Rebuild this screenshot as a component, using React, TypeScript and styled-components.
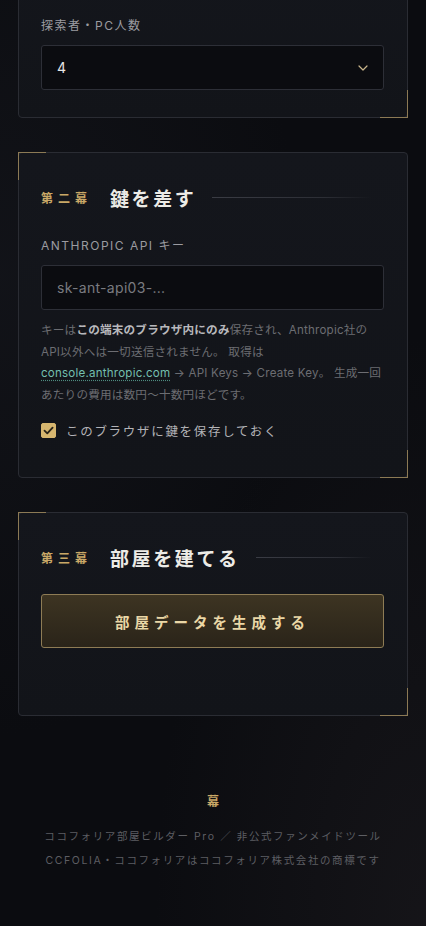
import React, { useState } from 'react';
import styled, { createGlobalStyle } from 'styled-components';

const GlobalStyle = createGlobalStyle`
  html, body {
    margin: 0;
    padding: 0;
    background: #0b0c10;
  }
  body {
    font-family: Inter, "Noto Sans CJK JP", sans-serif;
    color: #d8d8d8;
    overflow: hidden;
  }
`;

const Page = styled.div`
  min-height: 926px;
  box-sizing: border-box;
  padding: 0 18px;
  background:
    radial-gradient(ellipse at 100% 100%, rgba(40, 36, 40, 0.35), transparent 45%),
    radial-gradient(ellipse at 0% 30%, rgba(30, 32, 40, 0.35), transparent 50%),
    #0b0c10;
  display: flex;
  flex-direction: column;
`;

const Card = styled.section<{ $top?: number; $bottom: number; $first?: boolean }>`
  position: relative;
  box-sizing: border-box;
  margin-top: ${(p) => (p.$first ? '-40px' : '34px')};
  padding: ${(p) => p.$top ?? 31}px 23px ${(p) => p.$bottom}px 22px;
  background: linear-gradient(180deg, #14161c 0%, #121419 100%);
  border: 1px solid #2a2c33;
  border-radius: 4px;

  &::before {
    content: '';
    position: absolute;
    top: -1px;
    left: -1px;
    width: 27px;
    height: 27px;
    border-top: 1px solid #8c7a55;
    border-left: 1px solid #8c7a55;
    display: ${(p) => (p.$first ? 'none' : 'block')};
  }
  &::after {
    content: '';
    position: absolute;
    bottom: -1px;
    right: -1px;
    width: 27px;
    height: 27px;
    border-bottom: 1px solid #8c7a55;
    border-right: 1px solid #8c7a55;
  }
`;

const Heading = styled.div<{ $gap: number }>`
  display: flex;
  align-items: center;
  height: 26px;
  margin-bottom: ${(p) => p.$gap}px;
`;

const Act = styled.span`
  font-family: "Noto Sans CJK JP", serif;
  font-size: 12px;
  font-weight: 700;
  letter-spacing: 5px;
  color: #c9a867;
  margin-right: 18px;
`;

const Title = styled.h2`
  margin: 0;
  font-family: "Noto Sans CJK JP", serif;
  font-size: 19px;
  font-weight: 700;
  letter-spacing: 2.6px;
  color: #ecebe6;
  white-space: nowrap;
`;

const Rule = styled.span`
  flex: 1;
  height: 1px;
  margin-left: 16px;
  margin-right: 12px;
  background: linear-gradient(90deg, #3a3c44 0%, #2c2e35 70%, transparent 100%);
`;

const Label = styled.div`
  font-size: 12px;
  line-height: 18px;
  letter-spacing: 1.5px;
  color: #9b9ba0;
  margin-bottom: 10px;
`;

const Field = styled.div`
  position: relative;
  display: flex;
  align-items: center;
  height: 45px;
  box-sizing: border-box;
  padding: 0 15px;
  background: #0b0c10;
  border: 1px solid #2d2f37;
  border-radius: 3px;
`;

const Value = styled.span`
  flex: 1;
  font-size: 14px;
  color: #e6e6e6;
`;

const Placeholder = styled.span`
  flex: 1;
  font-size: 14px;
  color: #7a7b80;
  letter-spacing: 0.3px;
`;

const Help = styled.p`
  margin: 10px 0 0;
  font-size: 11.6px;
  line-height: 21.6px;
  letter-spacing: 0.2px;
  color: #6c6d72;

  strong {
    color: #b8b8bc;
    font-weight: 700;
  }
`;

const Link = styled.a`
  color: #73bfae;
  text-decoration: underline dotted #4e8c80;
  text-underline-offset: 3px;
`;

const CheckRow = styled.label`
  display: flex;
  align-items: center;
  gap: 10px;
  margin-top: 15px;
  font-size: 12.5px;
  letter-spacing: 1.7px;
  color: #b3b3b7;
  cursor: pointer;
`;

const Box = styled.span<{ $on: boolean }>`
  display: inline-flex;
  align-items: center;
  justify-content: center;
  width: 15px;
  height: 15px;
  border-radius: 2px;
  background: ${(p) => (p.$on ? '#d6b66f' : 'transparent')};
  border: 1px solid #d6b66f;
  box-sizing: border-box;
`;

const GenerateButton = styled.button`
  display: block;
  width: 100%;
  height: 54px;
  border: 1px solid #8e7c55;
  border-radius: 3px;
  background: linear-gradient(180deg, #3d3422 0%, #2a2419 100%);
  font-family: "Noto Sans CJK JP", serif;
  font-size: 14.5px;
  font-weight: 700;
  letter-spacing: 5px;
  color: #ead7a6;
  cursor: pointer;
`;

const Footer = styled.footer`
  margin-top: 74px;
  text-align: center;
`;

const Mark = styled.div`
  font-family: "Noto Sans CJK JP", serif;
  font-weight: 700;
  font-size: 12px;
  color: #c9a867;
  margin-top: 2px;
  margin-bottom: 16px;
`;

const FootLine = styled.div`
  font-size: 10.5px;
  line-height: 24px;
  letter-spacing: 1.6px;
  color: #5d5e63;
`;

const Chevron = () => (
  <svg width="10" height="6" viewBox="0 0 10 6" fill="none">
    <path d="M1 1l4 4 4-4" stroke="#c9b68c" strokeWidth="1.2" strokeLinecap="round" strokeLinejoin="round" />
  </svg>
);

const Check = () => (
  <svg width="11" height="9" viewBox="0 0 11 9" fill="none">
    <path d="M1.5 4.6l2.8 2.8L9.6 1.6" stroke="#2a2418" strokeWidth="1.8" strokeLinecap="round" strokeLinejoin="round" />
  </svg>
);

export default function App() {
  const [saveKey, setSaveKey] = useState(true);

  return (
    <>
      <GlobalStyle />
      <Page>
        <Card $first $top={56} $bottom={27}>
          <Label>探索者・PC人数</Label>
          <Field>
            <Value>4</Value>
            <Chevron />
          </Field>
        </Card>

        <Card $bottom={37}>
          <Heading $gap={27}>
            <Act>第二幕</Act>
            <Title>鍵を差す</Title>
            <Rule />
          </Heading>
          <Label>ANTHROPIC API キー</Label>
          <Field>
            <Placeholder>sk-ant-api03-...</Placeholder>
          </Field>
          <Help>
            キーは<strong>この端末のブラウザ内にのみ</strong>保存され、Anthropic社のAPI以外へは一切送信されません。 取得は
            <Link href="#">console.anthropic.com</Link> → API Keys → Create Key。 生成一回あたりの費用は数円〜十数円ほどです。
          </Help>
          <CheckRow onClick={() => setSaveKey(!saveKey)}>
            <Box $on={saveKey}>{saveKey && <Check />}</Box>
            このブラウザに鍵を保存しておく
          </CheckRow>
        </Card>

        <Card $bottom={67}>
          <Heading $gap={24}>
            <Act>第三幕</Act>
            <Title>部屋を建てる</Title>
            <Rule />
          </Heading>
          <GenerateButton>部屋データを生成する</GenerateButton>
        </Card>

        <Footer>
          <Mark>幕</Mark>
          <FootLine>ココフォリア部屋ビルダー Pro ／ 非公式ファンメイドツール</FootLine>
          <FootLine>CCFOLIA・ココフォリアはココフォリア株式会社の商標です</FootLine>
        </Footer>
      </Page>
    </>
  );
}
